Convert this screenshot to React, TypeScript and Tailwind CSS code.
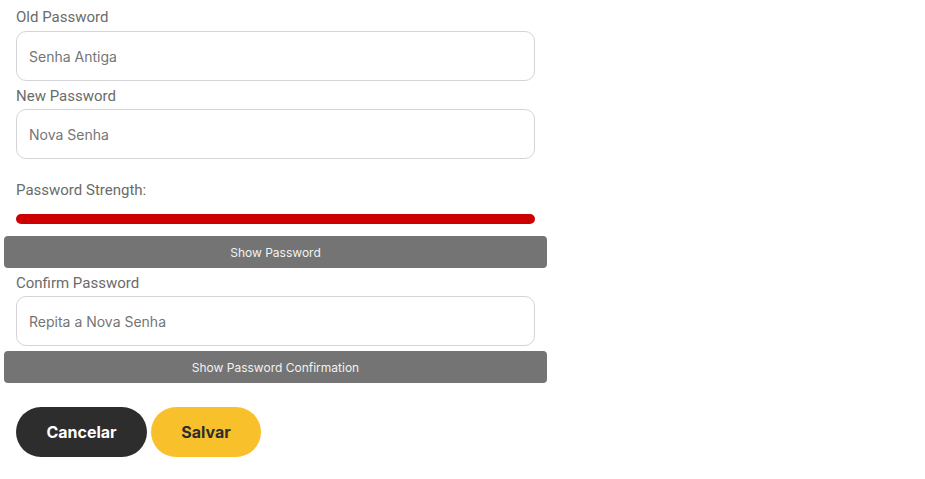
import { useState } from "react"

const labelCls = "block font-['Roboto',sans-serif] text-[15px] leading-[22px] text-[#6b6b6b]"
const inputCls =
  "block w-full h-[50px] rounded-[10px] border border-[#d4d4d8] bg-white px-3 font-['Inter',sans-serif] text-[14px] text-[#333] placeholder:text-[#757575] outline-none"
const toggleCls =
  "block w-full h-[32px] pt-[2px] rounded-[4px] bg-[#737473] font-['Inter',sans-serif] text-[12px] text-[#f2f2f2]"

export default function App() {
  const [showPw, setShowPw] = useState(false)
  const [showConfirm, setShowConfirm] = useState(false)

  return (
    <div className="min-h-screen bg-white">
      <form className="w-[543px] ml-[4px] pt-[6px]" onSubmit={(e) => e.preventDefault()}>
        <div className="px-3">
          <label className={labelCls}>Old Password</label>
          <input type="password" placeholder="Senha Antiga" className={`${inputCls} mt-[3px]`} />

          <label className={`${labelCls} mt-[4px]`}>New Password</label>
          <input
            type={showPw ? "text" : "password"}
            placeholder="Nova Senha"
            className={`${inputCls} mt-[2px]`}
          />

          <p className={`${labelCls} mt-[20px]`}>Password Strength:</p>
          <div className="mt-[13px] h-[10px] w-full rounded-full bg-[#cc0000]" />
        </div>

        <button type="button" className={`${toggleCls} mt-[12px]`} onClick={() => setShowPw(!showPw)}>
          Show Password
        </button>

        <div className="px-3">
          <label className={`${labelCls} mt-[4px]`}>Confirm Password</label>
          <input
            type={showConfirm ? "text" : "password"}
            placeholder="Repita a Nova Senha"
            className={`${inputCls} mt-[2px]`}
          />
        </div>

        <button
          type="button"
          className={`${toggleCls} mt-[5px]`}
          onClick={() => setShowConfirm(!showConfirm)}
        >
          Show Password Confirmation
        </button>

        <div className="px-3 mt-[24px] flex gap-[4px]">
          <button
            type="button"
            className="h-[50px] w-[131px] rounded-full bg-[#2d2d2d] font-['Inter',sans-serif] text-[16px] font-bold text-white"
          >
            Cancelar
          </button>
          <button
            type="submit"
            className="h-[50px] w-[110px] rounded-full bg-[#f8c02a] font-['Inter',sans-serif] text-[16px] font-bold text-[#2d2d2d]"
          >
            Salvar
          </button>
        </div>
      </form>
    </div>
  )
}
